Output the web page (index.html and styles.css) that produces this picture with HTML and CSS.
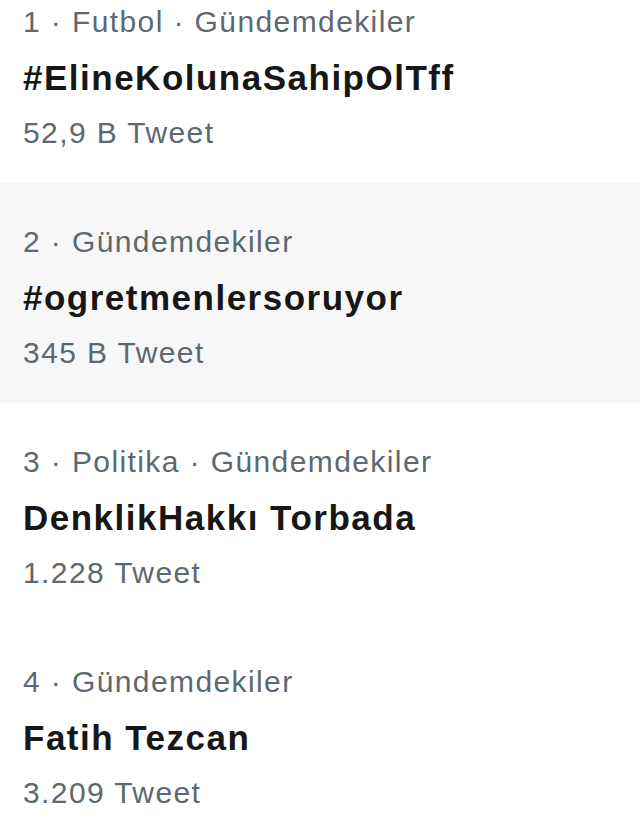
FILE: index.html
```html
<!DOCTYPE html>
<html lang="tr">
<head>
  <meta charset="UTF-8" />
  <meta name="viewport" content="width=device-width, initial-scale=1.0" />
  <title>Gündemdekiler</title>
  <link rel="stylesheet" href="styles.css">
</head>
<body>

  <div class="trends">
    <div class="trend">
      <div class="meta">1 · Futbol · Gündemdekiler</div>
      <div class="title">#ElineKolunaSahipOlTff</div>
      <div class="count">52,9 B Tweet</div>
    </div>

    <div class="trend hover">
      <div class="meta">2 · Gündemdekiler</div>
      <div class="title">#ogretmenlersoruyor</div>
      <div class="count">345 B Tweet</div>
    </div>

    <div class="trend">
      <div class="meta">3 · Politika · Gündemdekiler</div>
      <div class="title">DenklikHakkı Torbada</div>
      <div class="count">1.228 Tweet</div>
    </div>

    <div class="trend">
      <div class="meta">4 · Gündemdekiler</div>
      <div class="title">Fatih Tezcan</div>
      <div class="count">3.209 Tweet</div>
    </div>
  </div>

</body>
</html>
```

FILE: styles.css
```css
body {
  font-family: "Liberation Sans", Arial, sans-serif;
  background: #ffffff;
  margin: 0;
  overflow: hidden;
}

/* the list is scrolled a little, first item is cut at the top */
.trends {
  margin-top: -37px;
}

.trend {
  height: 220px;
  box-sizing: border-box;
  padding: 31px 23px 21px;
}

.trend.hover {
  background: #f7f7f7;
}

.meta, .count {
  font-size: 30px;
  line-height: 56px;
  letter-spacing: 1.4px;
  color: #5e6870;
}

.title {
  font-size: 35px;
  line-height: 55px;
  font-weight: bold;
  letter-spacing: 1.5px;
  color: #171717;
}
```
